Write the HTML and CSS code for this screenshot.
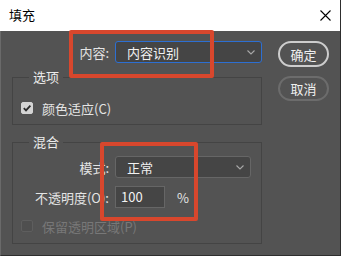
FILE: index.html
```html
<html lang="zh-CN">
<head>
    <meta charset="UTF-8">
    <title>填充</title>
    <link rel="stylesheet" href="styles.css">
</head>
<body>
    <div class="dialog">
        <!-- Barra de título -->
        <div class="titlebar">
            <span class="title">填充</span>
            <svg class="close" width="11" height="11" viewBox="0 0 11 11">
                <path d="M0.5 0.5 L10.5 10.5 M10.5 0.5 L0.5 10.5" stroke="#000" stroke-width="1.1" fill="none"/>
            </svg>
        </div>

        <div class="content">
            <div class="left">
                <!-- Contenido -->
                <div class="row top-row">
                    <label class="lbl lbl-top">内容:</label>
                    <div class="select focused">
                        <span>内容识别</span>
                        <svg class="chev" width="8" height="5" viewBox="0 0 8 5"><path d="M0.5 0.5 L4 4 L7.5 0.5" stroke="#a8a8a8" stroke-width="1.1" fill="none"/></svg>
                    </div>
                </div>

                <!-- Opciones -->
                <fieldset class="group group-opts">
                    <legend>选项</legend>
                    <div class="check-row">
                        <span class="checkbox checked">
                            <svg width="10" height="10" viewBox="0 0 10 10"><path d="M1.8 5.2 L4 7.4 L8.4 2.6" stroke="#2b2b2b" stroke-width="1.8" fill="none"/></svg>
                        </span>
                        <span>颜色适应(C)</span>
                    </div>
                </fieldset>

                <!-- Mezcla -->
                <fieldset class="group group-blend">
                    <legend>混合</legend>
                    <div class="row">
                        <label class="lbl">模式:</label>
                        <div class="select">
                            <span>正常</span>
                            <svg class="chev" width="8" height="5" viewBox="0 0 8 5"><path d="M0.5 0.5 L4 4 L7.5 0.5" stroke="#a8a8a8" stroke-width="1.1" fill="none"/></svg>
                        </div>
                    </div>
                    <div class="row row-opacity">
                        <label class="lbl">不透明度(O):</label>
                        <div class="num">100</div>
                        <span class="pct">%</span>
                    </div>
                    <div class="check-row disabled">
                        <span class="checkbox"></span>
                        <span>保留透明区域(P)</span>
                    </div>
                </fieldset>
            </div>

            <div class="buttons">
                <button class="btn primary">确定</button>
                <button class="btn">取消</button>
            </div>
        </div>

        <!-- Marcas rojas de anotación -->
        <div class="mark mark-1"></div>
        <div class="mark mark-2"></div>
    </div>
</body>
</html>
```

FILE: styles.css
```css
body {
    margin: 0;
    padding: 0;
    background-color: #535353;
    font-family: "Noto Sans CJK SC", "Microsoft YaHei", sans-serif;
    font-size: 13px;
    color: #e4e4e4;
}
.dialog {
    position: relative;
    width: 341px;
    height: 256px;
    box-sizing: border-box;
    border-right: 1px solid #2e2e2e;
    border-bottom: 1px solid #2e2e2e;
    border-left: 1px solid #6a6a6a;
    background-color: #535353;
}
.titlebar {
    height: 31px;
    margin-left: -1px;
    background-color: #fff;
    color: #000;
    display: flex;
    align-items: center;
    justify-content: space-between;
    padding: 0 9px 0 9px;
    box-sizing: border-box;
}
.title {
    font-size: 13px;
    line-height: 18px;
    margin-top: -1px;
}
.close {
    margin-top: -1px;
}
.content {
    display: flex;
    padding: 10px 0 0 11px;
    gap: 16px;
}
.left {
    width: 250px;
}
.row {
    display: flex;
    align-items: center;
    height: 22px;
}
.lbl {
    width: 88px;
    text-align: right;
    margin-right: 6px;
    white-space: nowrap;
    color: #e4e4e4;
}
.lbl-top {
    width: 97px;
}
.select {
    flex: 1;
    height: 22px;
    box-sizing: border-box;
    background-color: #454545;
    border: 1px solid #666;
    border-radius: 3px;
    display: flex;
    align-items: center;
    justify-content: space-between;
    padding: 0 6px 0 11px;
    color: #f2f2f2;
}
.select.focused {
    border-color: #2d6fd2;
}
.group-blend .select {
    flex: none;
    width: 136px;
}
.chev {
    margin-top: 1px;
}
.group {
    margin: 0;
    border: 1px solid #444;
    padding: 0 8px;
}
.group legend {
    margin-left: 8px;
    padding: 0 4px;
    line-height: 18px;
    color: #ececec;
}
.group-opts {
    margin-top: 5px;
    padding-top: 13px;
    padding-bottom: 7px;
}
.group-blend {
    margin-top: 8px;
    padding-top: 5px;
    padding-bottom: 8px;
}
.check-row {
    display: flex;
    align-items: center;
    height: 18px;
    gap: 9px;
}
.checkbox {
    width: 12px;
    height: 12px;
    box-sizing: border-box;
    border-radius: 2px;
    border: 1px solid #5e5e5e;
    background-color: #4f4f4f;
    display: flex;
    align-items: center;
    justify-content: center;
}
.checkbox.checked {
    background-color: #d4d4d4;
    border-color: #d4d4d4;
}
.row-opacity {
    margin-top: 8px;
}
.num {
    width: 50px;
    height: 22px;
    box-sizing: border-box;
    background-color: #454545;
    border: 1px solid #666;
    padding-left: 5px;
    line-height: 20px;
    color: #f2f2f2;
}
.pct {
    margin-left: 12px;
    color: #e4e4e4;
}
.disabled {
    margin-top: 9px;
    color: #787878;
}
.buttons {
    display: flex;
    flex-direction: column;
    gap: 9px;
}
.btn {
    width: 51px;
    height: 25px;
    box-sizing: border-box;
    border-radius: 13px;
    border: 2px solid #6c6c6c;
    background-color: #535353;
    color: #f0f0f0;
    font-family: inherit;
    font-size: 13px;
    padding: 0;
}
.btn.primary {
    height: 26px;
    border-color: #cdcdcd;
}
.mark {
    position: absolute;
    border: 4px solid #d8472d;
    border-radius: 2px;
    box-sizing: border-box;
}
.mark-1 {
    left: 68px;
    top: 30px;
    width: 145px;
    height: 48px;
}
.mark-2 {
    left: 99px;
    top: 142px;
    width: 98px;
    height: 79px;
}
```
